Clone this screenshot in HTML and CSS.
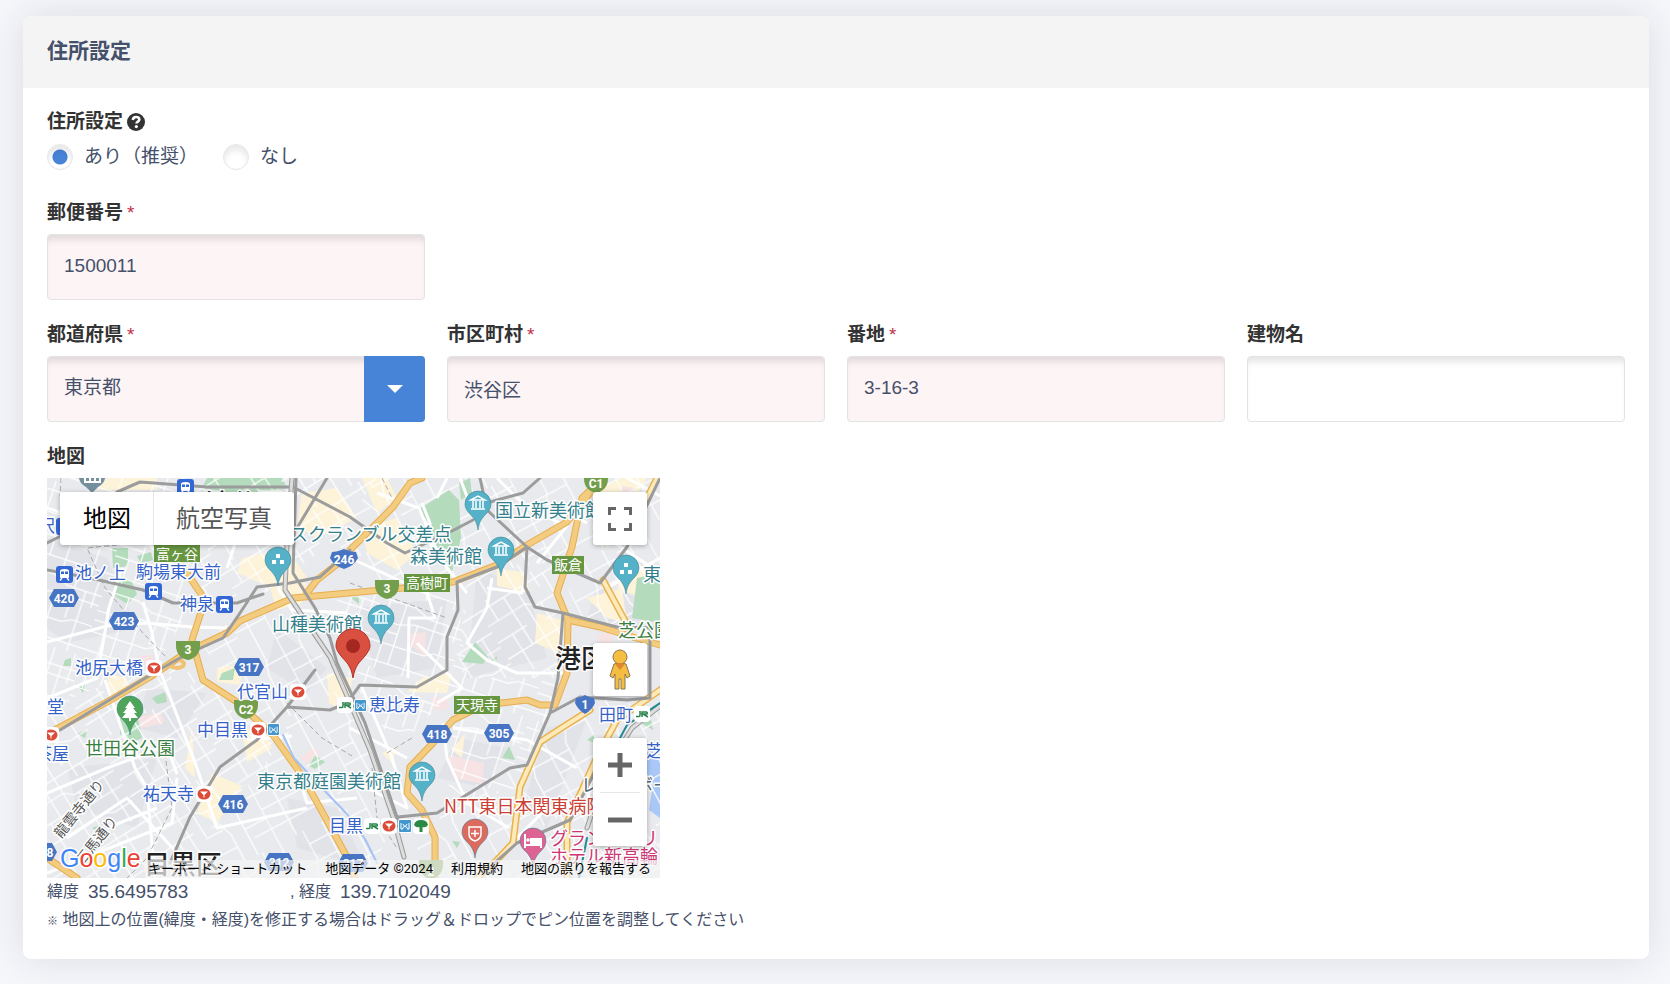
FILE: index.html
```html
<!DOCTYPE html>
<html lang="ja">
<head>
<meta charset="utf-8">
<title>住所設定</title>
<link rel="stylesheet" href="styles.css">
</head>
<body>
<section class="card">
  <header class="card-header"><h2 class="card-title">住所設定</h2></header>
  <form class="card-body">
    <fieldset class="group">
      <legend class="label">住所設定
        <svg class="help" viewBox="0 0 18 18" aria-hidden="true"><circle cx="9" cy="9" r="9"/><path d="M5.800 7C6 5 7.300 4 9.100 4c1.900 0 3.200 1 3.200 2.600 0 2-2.800 2.100-2.800 3.900" fill="none" stroke="#fff" stroke-width="2.600"/><circle cx="9.300" cy="13.600" r="1.600" fill="#fff"/></svg>
      </legend>
      <div class="radios">
        <label class="radio"><input type="radio" name="addr" checked>あり（推奨）</label>
        <label class="radio"><input type="radio" name="addr">なし</label>
      </div>
    </fieldset>

    <div class="grid grid-first">
      <div class="field">
        <label class="label" for="zip">郵便番号 <span class="req">*</span></label>
        <input class="input required" id="zip" type="text" value="1500011">
      </div>
    </div>

    <div class="grid">
      <div class="field">
        <label class="label" for="pref">都道府県 <span class="req">*</span></label>
        <div class="select-wrap">
          <select class="input required" id="pref"><option>東京都</option></select>
          <span class="select-arrow"></span>
        </div>
      </div>
      <div class="field">
        <label class="label" for="city">市区町村 <span class="req">*</span></label>
        <input class="input required" id="city" type="text" value="渋谷区">
      </div>
      <div class="field">
        <label class="label" for="street">番地 <span class="req">*</span></label>
        <input class="input required" id="street" type="text" value="3-16-3">
      </div>
      <div class="field">
        <label class="label" for="building">建物名</label>
        <input class="input" id="building" type="text">
      </div>
    </div>

    <div class="map-group">
      <div class="label">地図</div>
      <div class="map">
        <svg class="map-canvas" viewBox="0 0 613 400" preserveAspectRatio="xMidYMid slice" role="img" aria-label="地図">
          <defs>
            <pattern id="st1" width="74" height="66" patternUnits="userSpaceOnUse" patternTransform="rotate(18) scale(1.2)">
              <path class="street" d="M0 8H30L44 14H74M0 26H20L34 22H74M0 44H48L56 40H74M0 60H74M8 0V26M22 8V60M36 22V66M50 0V40M60 14V66M68 0V26M12 44V66M0 34H22"/>
            </pattern>
            <pattern id="st2" width="82" height="70" patternUnits="userSpaceOnUse" patternTransform="rotate(-32) scale(1.2)">
              <path class="street" d="M0 6H82M0 20H36L44 26H82M0 36H28M44 40H82M0 52H56L64 56H82M10 0V20M24 6V52M36 0V70M48 26V70M62 6V40M72 26V70M14 36V70M54 0V14"/>
            </pattern>
            <pattern id="st3" width="90" height="78" patternUnits="userSpaceOnUse" patternTransform="rotate(62) scale(1.2)">
              <path class="street" d="M0 10H50L64 4H90M0 28H26L38 34H90M0 50H90M0 66H40L52 70H90M12 0V28M28 10V50M44 34V78M58 8V50M76 4V66M8 50V78M66 50V70"/>
            </pattern>
            <symbol id="hex" viewBox="0 0 32 20" overflow="visible"><path d="M6 1H26L31 10L26 19H6L1 10Z" fill="#4775c4"/></symbol>
            <symbol id="tri" viewBox="0 0 26 20" overflow="visible"><path d="M1 0H25V5C25 13 19 18 13 19C7 18 1 13 1 5Z" fill="#739e4b"/></symbol>
            <symbol id="shield" viewBox="0 0 30 20" overflow="visible"><path d="M3 3Q8 3 15 0Q22 3 27 3L29 9Q25 17 15 20Q5 17 1 9Z" fill="#4775c4"/></symbol>
            <symbol id="pin" viewBox="0 0 26 40" overflow="visible"><path d="M13 39C12 31 9 27 5 23C2 20 0 17 0 13A13 13 0 0 1 26 13C26 17 24 20 21 23C17 27 14 31 13 39Z" stroke="#37798c" stroke-opacity=".5"/></symbol>
            <symbol id="museum" viewBox="0 0 16 16" overflow="visible"><path d="M1 5L8 1L15 5Z M3 6V13M6 6V13M10 6V13M13 6V13M1 14H15" fill="none" stroke="#fff" stroke-width="1.500"/></symbol>
            <symbol id="train" viewBox="0 0 17 17" overflow="visible"><rect width="17" height="17" rx="3" fill="#3367d6"/><path d="M4 5Q4 3 8.500 3T13 5V11Q13 12 12 12H5Q4 12 4 11Z" fill="#fff"/><path d="M5 5.500H8V8H5ZM9 5.500H12V8H9Z" fill="#3367d6"/><path d="M6 12L4 14.500M11 12L13 14.500" stroke="#fff" stroke-width="1.300"/></symbol>
            <symbol id="metro" viewBox="0 0 16 16" overflow="visible"><rect width="16" height="16" rx="4" fill="#fff"/><ellipse cx="8" cy="8" rx="6.500" ry="5.500" fill="#dc4a38"/><path d="M4 5.500H12L8.500 9V11.500H7.500V9Z" fill="#fff"/></symbol>
            <symbol id="toei" viewBox="0 0 12 12" overflow="visible"><rect x="-1" y="-1" width="14" height="14" rx="2" fill="#fff"/><rect width="12" height="12" rx="1" fill="#4197ce"/><path d="M2 3V9Q4 10 4 7.500Q6 5 8 7.500Q8 10 10 9V3M4 4Q6 9 8 4" fill="none" stroke="#fff"/></symbol>
            <symbol id="jr" viewBox="0 0 16 16" overflow="visible"><rect width="16" height="16" rx="4" fill="#fff"/><path d="M2 10.500H5Q6 10.500 6 9V5M8 11V6H12Q14 6 13 8H9L14 11" fill="none" stroke="#28844b" stroke-width="1.500"/></symbol>
          </defs>

          <rect width="613" height="400" fill="#e8eaed"/>
          <g fill="#e1e3e8">
            <path d="M0 60L60 80L90 150L20 165L0 150ZM100 210L160 215L130 260L90 250ZM230 150L280 190L260 215L220 190ZM310 130L400 120L390 190L330 200ZM430 90L480 110L500 180L420 200ZM410 260L460 270L440 310L390 300ZM500 250L540 240L500 350L475 330ZM20 290L110 280L90 350L30 330ZM240 320L290 330L320 390L250 370ZM550 110L600 120L590 150L540 140Z"/>
          </g>
          <g fill="#fdf3d9">
            <path d="M60 0H110V12H50ZM195 80L240 70L260 100L220 108L190 95ZM255 15L290 10L310 40L270 60L250 48ZM315 50L350 40L370 75L350 92L320 75ZM450 90L480 95L482 115L450 108ZM490 135L515 142L512 175L488 165ZM553 10L575 0H600L580 35L555 70L545 50ZM540 120L575 110L580 145L560 140ZM375 200L405 195L400 215L360 214ZM280 195L305 200L300 235L282 225ZM165 295L195 308L170 345L150 335ZM195 255L215 245L225 270L200 284ZM170 190L200 185L192 207L170 204ZM220 100L260 105L255 125L230 132ZM145 250L148 300L138 290ZM315 0L340 0L350 20L330 35ZM585 85L600 90L590 118L570 110ZM335 275L350 268L345 285ZM405 272L418 255L415 280ZM60 196L80 200L78 230L62 218Z"/>
          </g>
          <g fill="#b3dbbc">
            <path d="M160 0H235L240 10L215 17L180 14L155 10ZM65 70H81V88L66 90ZM90 78L104 74L106 82L94 86ZM66 104L84 102L90 116L80 126L68 118ZM405 363L413 364L410 370ZM443 183L450 178L449 187ZM262 288L268 277L278 284L268 291ZM73 240L90 235L95 260L84 265L73 256ZM455 280L462 268L468 282ZM175 195L188 190L186 202L172 202ZM30 206L38 206L36 215ZM105 220L118 214L120 224L110 226ZM30 256L40 252L38 260ZM540 262L548 256V265ZM45 350L55 346L52 354ZM18 182L24 180V188L16 188ZM304 120L312 118V126ZM594 245L604 242L606 252Z"/>
          </g>
          <g fill="#f7e3e3">
            <path d="M91 239L114 234L117 245L94 250ZM92 178L107 177L103 188L90 184ZM362 156L379 154L378 178L365 168ZM385 219L402 220L399 232L387 231ZM401 277L437 285L435 306L409 300ZM550 157L566 154L564 172L552 170ZM253 280L267 269L272 274L261 286ZM575 8L588 10L582 22L572 18Z"/>
          </g>
          <path d="M597 270L607 266L613 280V340L602 332L606 305L596 290Z" fill="#a9c7f7"/>
          <path fill="url(#st1)" d="M0 0H130L150 120L110 185L0 230ZM290 120L410 110L420 200L350 270L290 180ZM410 200H520L470 310L400 330Z"/>
          <path fill="url(#st2)" d="M130 0H330L290 60L200 130L150 120ZM0 230L110 185L160 200L230 270L130 400H0ZM420 95L510 80L516 200H410Z"/>
          <path fill="url(#st3)" d="M330 0H613V170L520 140L525 80L410 100L310 110L290 60ZM150 160L240 120L290 200L350 340L320 400H130L230 270ZM360 340L470 290L550 220L613 230V400H380Z"/>

          <path fill="#b3dbbc" d="M371 32L402 12L412 22L414 60L405 94L388 68L382 45ZM412 5L423 0L425 15L414 22ZM590 100L613 95V145L585 140ZM428 164L441 179L436 186L415 184Z"/>
          <g fill="none" stroke="#fff" stroke-width="3" stroke-linejoin="round">
            <path d="M0 164L60 148L100 145L145 149L180 150M96 124L105 155L112 190L150 290L170 350L260 330M0 315L60 290L120 268L130 296M58 202L88 290L100 310L108 400M0 220L50 200L62 130L75 90M130 300L125 345L0 395M180 90L195 45L245 10M375 25L383 45L385 80M303 80L380 115L388 140L362 140L361 200M445 100L440 130L420 165L440 182L470 195L520 195M440 110L475 115L478 100M330 15L372 30L388 68L400 90L420 115M313 205L345 280L360 330L300 300M396 245L400 280L420 325L462 350M406 250L480 262L530 290M360 280L303 250M390 20L400 0M413 0L425 32M560 60L613 95M560 110L613 80M470 360L500 330L540 325L550 275M370 165L415 210L390 225M240 260L260 325L310 320M200 262L245 258M228 85L232 112L245 132L300 135M20 360L80 320L130 375M0 30L60 50L100 65L130 90M580 0L613 18M500 25L540 45M60 350L110 330M450 0L480 30L520 48L490 85"/>
          </g>

          <g fill="none" stroke="#aaa" stroke-dasharray="5 3" stroke-width="1">
            <path d="M14 0L13 18M70 67L40 70L58 110L96 155L120 180M303 105L350 122L400 140M118 275L125 330L100 380L80 400M240 225L275 260L305 278M340 275L365 260M325 290L330 340L350 370M335 0L345 20"/>
          </g>

          <g fill="none" stroke-linejoin="round" stroke-linecap="round">
            <g stroke="#e6ad4f" stroke-width="7">
              <path d="M0 256L60 224L103 199L140 174L180 155L193 143L246 120L313 114L356 110L406 104L450 87L480 67L520 44L543 15L556 0"/>
              <path d="M136 89L158 122L145 162L156 202L190 224L226 257L256 299L300 379L308 400"/>
              <path d="M388 400V359L375 332L360 315L363 289L386 265L406 242L436 227L480 222L493 227H508L520 195L521 142L510 115L525 69L535 20L556 0M521 142L553 149L586 159L613 167"/>
              <path d="M303 72L346 29L363 5L375 0M303 76L270 102L260 115M0 380L30 400"/>
            </g>
            <g stroke="#f3cc80" stroke-width="5">
              <path d="M0 256L60 224L103 199L140 174L180 155L193 143L246 120L313 114L356 110L406 104L450 87L480 67L520 44L543 15L556 0M136 89L158 122L145 162L156 202L190 224L226 257L256 299L300 379L308 400M388 400V359L375 332L360 315L363 289L386 265L406 242L436 227L480 222L493 227H508L520 195L521 142L510 115L525 69L535 20L556 0M521 142L553 149L586 159L613 167M303 72L346 29L363 5L375 0M303 76L270 102L260 115M0 380L30 400"/>
            </g>
            <ellipse cx="130" cy="186" rx="7" ry="4" stroke="#f0c271" stroke-width="4"/>
            <g stroke="#e9b250" stroke-width="7"><path d="M543 232L516 249L493 264L473 309L466 365L450 382L430 400M556 102L583 152M613 212L570 242L550 279L520 345V400M610 0L600 20"/></g>
            <g stroke="#fdeab8" stroke-width="4"><path d="M543 232L516 249L493 264L473 309L466 365L450 382L430 400M556 102L583 152M613 212L570 242L550 279L520 345V400M610 0L600 20"/></g>
            <g stroke="#9c9c9c" stroke-width="3">
              <path d="M0 92L43 100L96 112L126 125L190 125L216 116M13 252L110 193L140 176L176 160L193 135L210 109L243 105L273 99L303 72M70 14L93 4L160 9H246L303 39L340 65L358 75L403 54L426 42M433 0L440 32L480 69L500 82L553 105L580 69L613 0M493 0L476 15L450 22L430 28M480 69L478 109L488 129L516 135L570 149L613 150M480 69L450 89L410 104L411 132L400 159V192L370 209L313 207L300 225L283 232L240 229M268 192L240 229L210 262L173 289L143 339L123 385M351 339L390 335L463 290L480 287L503 235L533 219L580 222L603 220V150M516 135L511 200L503 235M436 395L470 365L523 342L550 290M280 0L250 50M0 65L40 45"/>
            </g>
            <g stroke="#999" stroke-width="5"><path d="M245 0L240 67L238 112L256 139L283 179L303 225L323 272L346 339L357 379M613 228L585 250L560 290L540 350"/></g>
            <g stroke="#ddd" stroke-width="3"><path d="M245 0L240 67L238 112L256 139L283 179L303 225L323 272L346 339L357 379M613 228L585 250L560 290L540 350"/></g>
            <path d="M249 0L246 95L268 130L283 160L290 185L318 245L352 345" stroke="#9c9c9c" stroke-width="3"/>
            <path d="M236 257L247 280L270 305L300 336L318 361L330 385" stroke="#a4c2f5" stroke-width="2"/>
            <path d="M613 225L580 247L565 275M540 360L532 400" stroke="#218b94" stroke-width="2"/>
          </g>

          <g class="shield">
            <use href="#hex" x="1" y="110" width="32" height="20"/><text x="17" y="125">420</text>
            <use href="#hex" x="61" y="133" width="32" height="20"/><text x="77" y="148">423</text>
            <use href="#hex" x="186" y="179" width="32" height="20"/><text x="202" y="194">317</text>
            <use href="#hex" x="170" y="316" width="32" height="20"/><text x="186" y="331">416</text>
            <use href="#hex" x="374" y="246" width="32" height="20"/><text x="390" y="261">418</text>
            <use href="#hex" x="436" y="245" width="32" height="20"/><text x="452" y="260">305</text>
            <use href="#hex" x="216" y="374" width="32" height="20"/><text x="232" y="389">312</text>
            <use href="#hex" x="290" y="375" width="32" height="20"/><text x="306" y="390">317</text>
            <use href="#hex" x="-21" y="364" width="32" height="20"/><text x="3" y="379">8</text>
            <use href="#shield" x="282" y="71" width="30" height="20"/><text x="297" y="86">246</text>
            <path d="M529 220Q534 220 538 217Q542 220 547 220L548 225Q545 232 538 236Q531 232 528 225Z" fill="#4775c4"/><text x="538" y="231">1</text>
            <use href="#tri" x="128" y="163" width="26" height="20"/><text x="141" y="176">3</text>
            <use href="#tri" x="327" y="102" width="26" height="20"/><text x="340" y="115">3</text>
            <use href="#tri" x="186" y="222" width="26" height="20"/><text x="199" y="236">C2</text>
            <use href="#tri" x="536" y="-4" width="26" height="20"/><text x="549" y="10">C1</text>
            <use href="#tri" x="371" y="382" width="26" height="20"/><text x="384" y="398">2</text>
          </g>
          <g fill="#679641"><path d="M107 67H153V84H107ZM357 96H403V114H357ZM505 78H537V96H505ZM407 218H453V236H407Z"/></g>
          <g class="exit"><text x="130" y="81">富ヶ谷</text><text x="380" y="110">高樹町</text><text x="521" y="92">飯倉</text><text x="430" y="232">天現寺</text></g>

          <g fill="#55b1c8">
            <use href="#pin" x="218" y="69" width="26" height="40"/><use href="#pin" x="418" y="13" width="26" height="40"/>
            <use href="#pin" x="441" y="59" width="26" height="40"/><use href="#pin" x="566" y="77" width="26" height="40"/>
            <use href="#pin" x="321" y="127" width="26" height="40"/><use href="#pin" x="362" y="284" width="26" height="40"/>
          </g>
          <use href="#pin" x="70" y="218" width="26" height="40" fill="#4ea45b"/>
          <use href="#pin" x="415" y="341" width="26" height="40" fill="#dd6a5e"/>
          <use href="#pin" x="473" y="350" width="26" height="40" fill="#dc6394"/>
          <path d="M32 0H58Q57 6 51 9L45 15L39 9Q33 6 32 0Z" fill="#768f9c"/>
          <path d="M38 4V0M43 4V0M48 4V0M53 4V0M37 4H54" stroke="#fff" stroke-width="2"/>
          <use href="#museum" x="423" y="17" width="16" height="16"/><use href="#museum" x="446" y="63" width="16" height="16"/>
          <use href="#museum" x="326" y="131" width="16" height="16"/><use href="#museum" x="367" y="288" width="16" height="16"/>
          <path d="M229 76H233V80H229ZM225 82H229V86H225ZM233 82H237V86H233ZM577 85H581V89H577ZM573 92H577V96H573ZM581 92H585V96H581Z" fill="#fff"/>
          <path d="M83 223L88 230H86L90 235H87L91 240H84V243H82V240H75L79 235H76L80 230H78Z" fill="#fff"/>
          <path d="M422 349H434V356Q434 361 428 363Q422 361 422 356ZM428 352V359M424 355.500H432" fill="none" stroke="#fff" stroke-width="1.500"/>
          <path d="M478 356V370M478 367H494V370M494 367V361H484V366" fill="none" stroke="#fff" stroke-width="2"/><path d="M484 361H492Q494 361 494 363V367H484Z" fill="#fff"/><circle cx="481" cy="362" r="1.800" fill="#fff"/>

          <use href="#train" x="9" y="88" width="17" height="17"/><use href="#train" x="98" y="105" width="17" height="17"/>
          <use href="#train" x="169" y="118" width="17" height="17"/><use href="#train" x="130" y="1" width="17" height="17"/>
          <use href="#train" x="9" y="40" width="17" height="17"/>
          <use href="#metro" x="99" y="182" width="16" height="16"/><use href="#metro" x="243" y="206" width="16" height="16"/>
          <use href="#metro" x="203" y="244" width="16" height="16"/><use href="#metro" x="-4" y="249" width="16" height="16"/>
          <use href="#metro" x="149" y="308" width="16" height="16"/><use href="#metro" x="334" y="340" width="16" height="16"/>
          <use href="#toei" x="221" y="246" width="11" height="11"/><use href="#toei" x="308" y="222" width="11" height="11"/><use href="#toei" x="352" y="342" width="12" height="12"/>
          <use href="#jr" x="290" y="219" width="16" height="16"/><use href="#jr" x="317" y="340" width="16" height="16"/><use href="#jr" x="587" y="228" width="16" height="16"/>
          <rect x="366" y="340" width="16" height="16" rx="4" fill="#fff"/><path d="M367 347Q368 342 374 342T381 347Q379 350 375.500 349V354H372.500V349Q369 350 367 347Z" fill="#288a43"/>

          <g class="place station">
            <text x="28" y="101">池ノ上</text><text x="89" y="100">駒場東大前</text><text x="133" y="132">神泉</text><text x="28" y="196">池尻大橋</text>
            <text x="190" y="220">代官山</text><text x="150" y="258">中目黒</text><text x="322" y="233">恵比寿</text><text x="552" y="243">田町</text>
            <text x="0" y="235">堂</text><text x="-12" y="282">茶屋</text><text x="96" y="322">祐天寺</text><text x="282" y="354">目黒</text>
            <text x="-9" y="54">沢</text><text x="599" y="279">芝浦</text>
          </g>
          <g class="place sight">
            <text x="243" y="63">スクランブル交差点</text><text x="448" y="39">国立新美術館</text><text x="363" y="85">森美術館</text>
            <text x="225" y="153">山種美術館</text><text x="210" y="310">東京都庭園美術館</text><text x="596" y="103">東京タワー</text>
          </g>
          <g class="place park"><text x="38" y="277">世田谷公園</text><text x="571" y="159">芝公園</text></g>
          <g class="place bridge"><text x="534" y="314">レインボー</text></g>
          <g class="place hospital"><text x="397" y="335">NTT東日本関東病院</text></g>
          <g class="place hotel"><text x="503" y="367">グランドプリンス</text><text x="503" y="385">ホテル新高輪</text></g>
          <g class="place ward"><text x="508" y="190">港区</text><text x="97" y="396">目黒区</text><text x="158" y="35">渋谷区</text></g>
          <g class="place road"><text transform="translate(14 361) rotate(-51)">龍雲寺通り</text><text transform="translate(36 387) rotate(-51)">三馬通り</text></g>

          <path d="M306 200C304 187 299 184 294 178C291 174 289 171 289 168A17 17 0 0 1 323 168C323 171 321 174 318 178C313 184 308 187 306 200Z" fill="#d94f40" stroke="#b63328"/>
          <circle cx="306" cy="168" r="7" fill="#a42820"/>
          <text class="google" x="13" y="389"><tspan fill="#4285f4">G</tspan><tspan fill="#ea4335">o</tspan><tspan fill="#fbbc04">o</tspan><tspan fill="#4285f4">g</tspan><tspan fill="#34a853">l</tspan><tspan fill="#ea4335">e</tspan></text>
        </svg>

        <div class="map-types">
          <button type="button" class="map-type active">地図</button>
          <button type="button" class="map-type">航空写真</button>
        </div>
        <button type="button" class="map-btn fullscreen" aria-label="全画面">
          <svg width="24" height="24" viewBox="0 0 24 24" fill="none" stroke="#666" stroke-width="3"><path d="M1.500 8V1.500H8M16 1.500H22.500V8M22.500 16V22.500H16M8 22.500H1.500V16"/></svg>
        </button>
        <button type="button" class="map-btn pegman" aria-label="ストリートビュー">
          <svg width="24" height="42" viewBox="0 0 24 42"><g fill="#f5bd41" stroke="#8b7850" stroke-width="1"><path d="M6 15Q12 12 18 15L22 27L19 29L17 25V40H13V30H11V40H7V25L5 29L2 27Z"/><circle cx="12" cy="8" r="7"/></g><path d="M7 15L12 21L17 15Q12 13 7 15Z" fill="#df8731"/></svg>
        </button>
        <div class="zoom">
          <button type="button" class="zoom-btn" aria-label="拡大"><svg width="24" height="24" viewBox="0 0 24 24"><path d="M0 12H24M12 0V24" stroke="#666" stroke-width="5"/></svg></button>
          <button type="button" class="zoom-btn" aria-label="縮小"><svg width="24" height="24" viewBox="0 0 24 24"><path d="M0 12H24" stroke="#666" stroke-width="5"/></svg></button>
        </div>
        <div class="credits">
          <button type="button" class="credit">キーボード ショートカット</button>
          <span class="credit">地図データ ©2024</span>
          <a class="credit" href="#">利用規約</a>
          <a class="credit" href="#">地図の誤りを報告する</a>
        </div>
      </div>
      <div class="coords">
        <label for="lat">緯度</label><input class="coord" id="lat" type="text" value="35.6495783" readonly>
        <label for="lng">, 経度</label><input class="coord" id="lng" type="text" value="139.7102049" readonly>
      </div>
      <p class="note"><span class="note-mark">※</span> 地図上の位置(緯度・経度)を修正する場合はドラッグ＆ドロップでピン位置を調整してください</p>
    </div>
  </form>
</section>
</body>
</html>
```
FILE: styles.css
```css
* { box-sizing: border-box; }

body {
  margin: 0;
  padding: 16px 21px 26px 23px;
  background: #f5f7fb;
  color: #45506a;
  font-family: "Liberation Sans", "Noto Sans CJK JP", sans-serif;
  font-size: 19px;
  line-height: 28px;
}

input, select, button { font: inherit; color: inherit; }

.card {
  background: #fff;
  border-radius: 8px;
  box-shadow: 0 0 40px rgba(40, 40, 60, .13);
  overflow: hidden;
}
.card-header {
  padding: 20px 24px 22px;
  background: #f4f4f4;
}
.card-title {
  margin: 0;
  font-size: 21px;
  line-height: 30px;
  font-weight: 700;
}
.card-body { padding: 20px 24px 24px; }

.group { margin: 0; padding: 0; border: 0; }
.label {
  display: flex;
  align-items: center;
  gap: 4px;
  padding: 0;
  color: #333;
  font-weight: 700;
}
.req { color: #c0304a; font-weight: 400; }
.help { width: 18px; height: 18px; fill: #333; }

.radios { display: flex; gap: 25px; margin-top: 7px; }
.radio { display: flex; align-items: center; gap: 11px; }
.radio input {
  appearance: none;
  width: 26px;
  height: 26px;
  margin: 0;
  border: 1px solid #e6e6e6;
  border-radius: 50%;
  background: #fff;
  box-shadow: inset 0 5px 6px rgba(0, 0, 0, .09);
}
.radio input:checked {
  background: radial-gradient(circle, #4783d7 0 7px, transparent 8px);
}

.grid {
  display: grid;
  grid-template-columns: repeat(4, minmax(0, 1fr));
  gap: 22px;
  margin-top: 21px;
}
.grid-first { margin-top: 28px; }
.field { display: flex; flex-direction: column; gap: 7px; }
.input {
  width: 100%;
  height: 66px;
  padding: 0 16px 2px;
  border: 1px solid #e3e3e3;
  border-radius: 4px;
  background: #fff;
  box-shadow: inset 0 8px 6px -3px rgba(0, 0, 0, .1);
}
.required { background: #fdf4f5; }
.select-wrap { display: flex; position: relative; }
.select-wrap .input { appearance: none; }
.select-arrow {
  position: absolute;
  inset: 0 0 0 auto;
  width: 61px;
  display: grid;
  place-items: center;
  border-radius: 0 4px 4px 0;
  background: #4783d7;
  pointer-events: none;
}
.select-arrow::after {
  content: "";
  border: 8px solid transparent;
  border-top-color: #fff;
  border-bottom: 0;
}

.map-group { margin-top: 21px; }
.map {
  position: relative;
  width: 100%;
  max-width: 613px;
  height: 400px;
  margin-top: 7px;
  overflow: hidden;
}
.map-canvas { display: block; width: 100%; height: 100%; font-family: "Noto Sans CJK JP", sans-serif; }
.street { fill: none; stroke: #fff; stroke-width: 1; }
.shield { fill: #fff; font: 700 12px Roboto, sans-serif; text-anchor: middle; }
.exit { fill: #fff; font-size: 14px; text-anchor: middle; }
.place { font-size: 18px; paint-order: stroke; stroke: #fff; stroke-width: 3px; stroke-linejoin: round; }
.station { fill: #3562c8; font-size: 17px; }
.sight { fill: #347f8c; }
.park { fill: #3b8043; }
.bridge { fill: #536879; }
.hospital { fill: #cb4035; }
.hotel { fill: #cc3875; }
.ward { fill: #222; font-size: 26px; font-weight: 500; }
.road { fill: #555; font-size: 14px; }
.google { font: 500 25px "Liberation Sans", sans-serif; paint-order: stroke; stroke: #fff; stroke-width: 3px; }

.map-types {
  position: absolute;
  top: 14px;
  left: 13px;
  display: flex;
  border-radius: 3px;
  background: #fff;
  box-shadow: 0 1px 5px rgba(0, 0, 0, .3);
}
.map-type {
  height: 53px;
  padding: 0 22px;
  border: 0;
  background: none;
  color: #565656;
  font-size: 24px;
}
.map-type.active { padding-left: 23px; border-right: 1px solid #e6e6e6; color: #000; }
.map-btn, .zoom {
  position: absolute;
  right: 13px;
  width: 54px;
  border: 0;
  border-radius: 3px;
  background: #fff;
  box-shadow: 0 1px 5px rgba(0, 0, 0, .3);
}
.map-btn { display: grid; place-items: center; height: 53px; padding: 0; }
.fullscreen { top: 14px; }
.pegman { bottom: 182px; }
.zoom { bottom: 32px; padding: 0 7px; }
.zoom-btn {
  display: grid;
  place-items: center;
  width: 100%;
  height: 54px;
  padding: 0;
  border: 0;
  background: none;
}
.zoom-btn + .zoom-btn { border-top: 1px solid #e6e6e6; }
.credits {
  position: absolute;
  right: 0;
  bottom: 0;
  display: flex;
  gap: 18px;
  padding: 0 9px 0 3px;
  background: rgba(245, 245, 245, .7);
  color: #000;
  font-family: Roboto, "Noto Sans CJK JP", sans-serif;
  font-size: 13px;
  line-height: 18px;
  white-space: nowrap;
}
.credit { padding: 0; border: 0; background: none; color: #000; text-decoration: none; }

.coords {
  display: flex;
  align-items: center;
  gap: 9px;
  font-size: 16px;
}
.coord {
  width: 193px;
  padding: 0;
  border: 0;
  background: none;
  font-size: 19px;
  line-height: 28px;
}
.note { margin: 0; font-size: 16px; }
.note-mark { font-size: 11px; }
```
